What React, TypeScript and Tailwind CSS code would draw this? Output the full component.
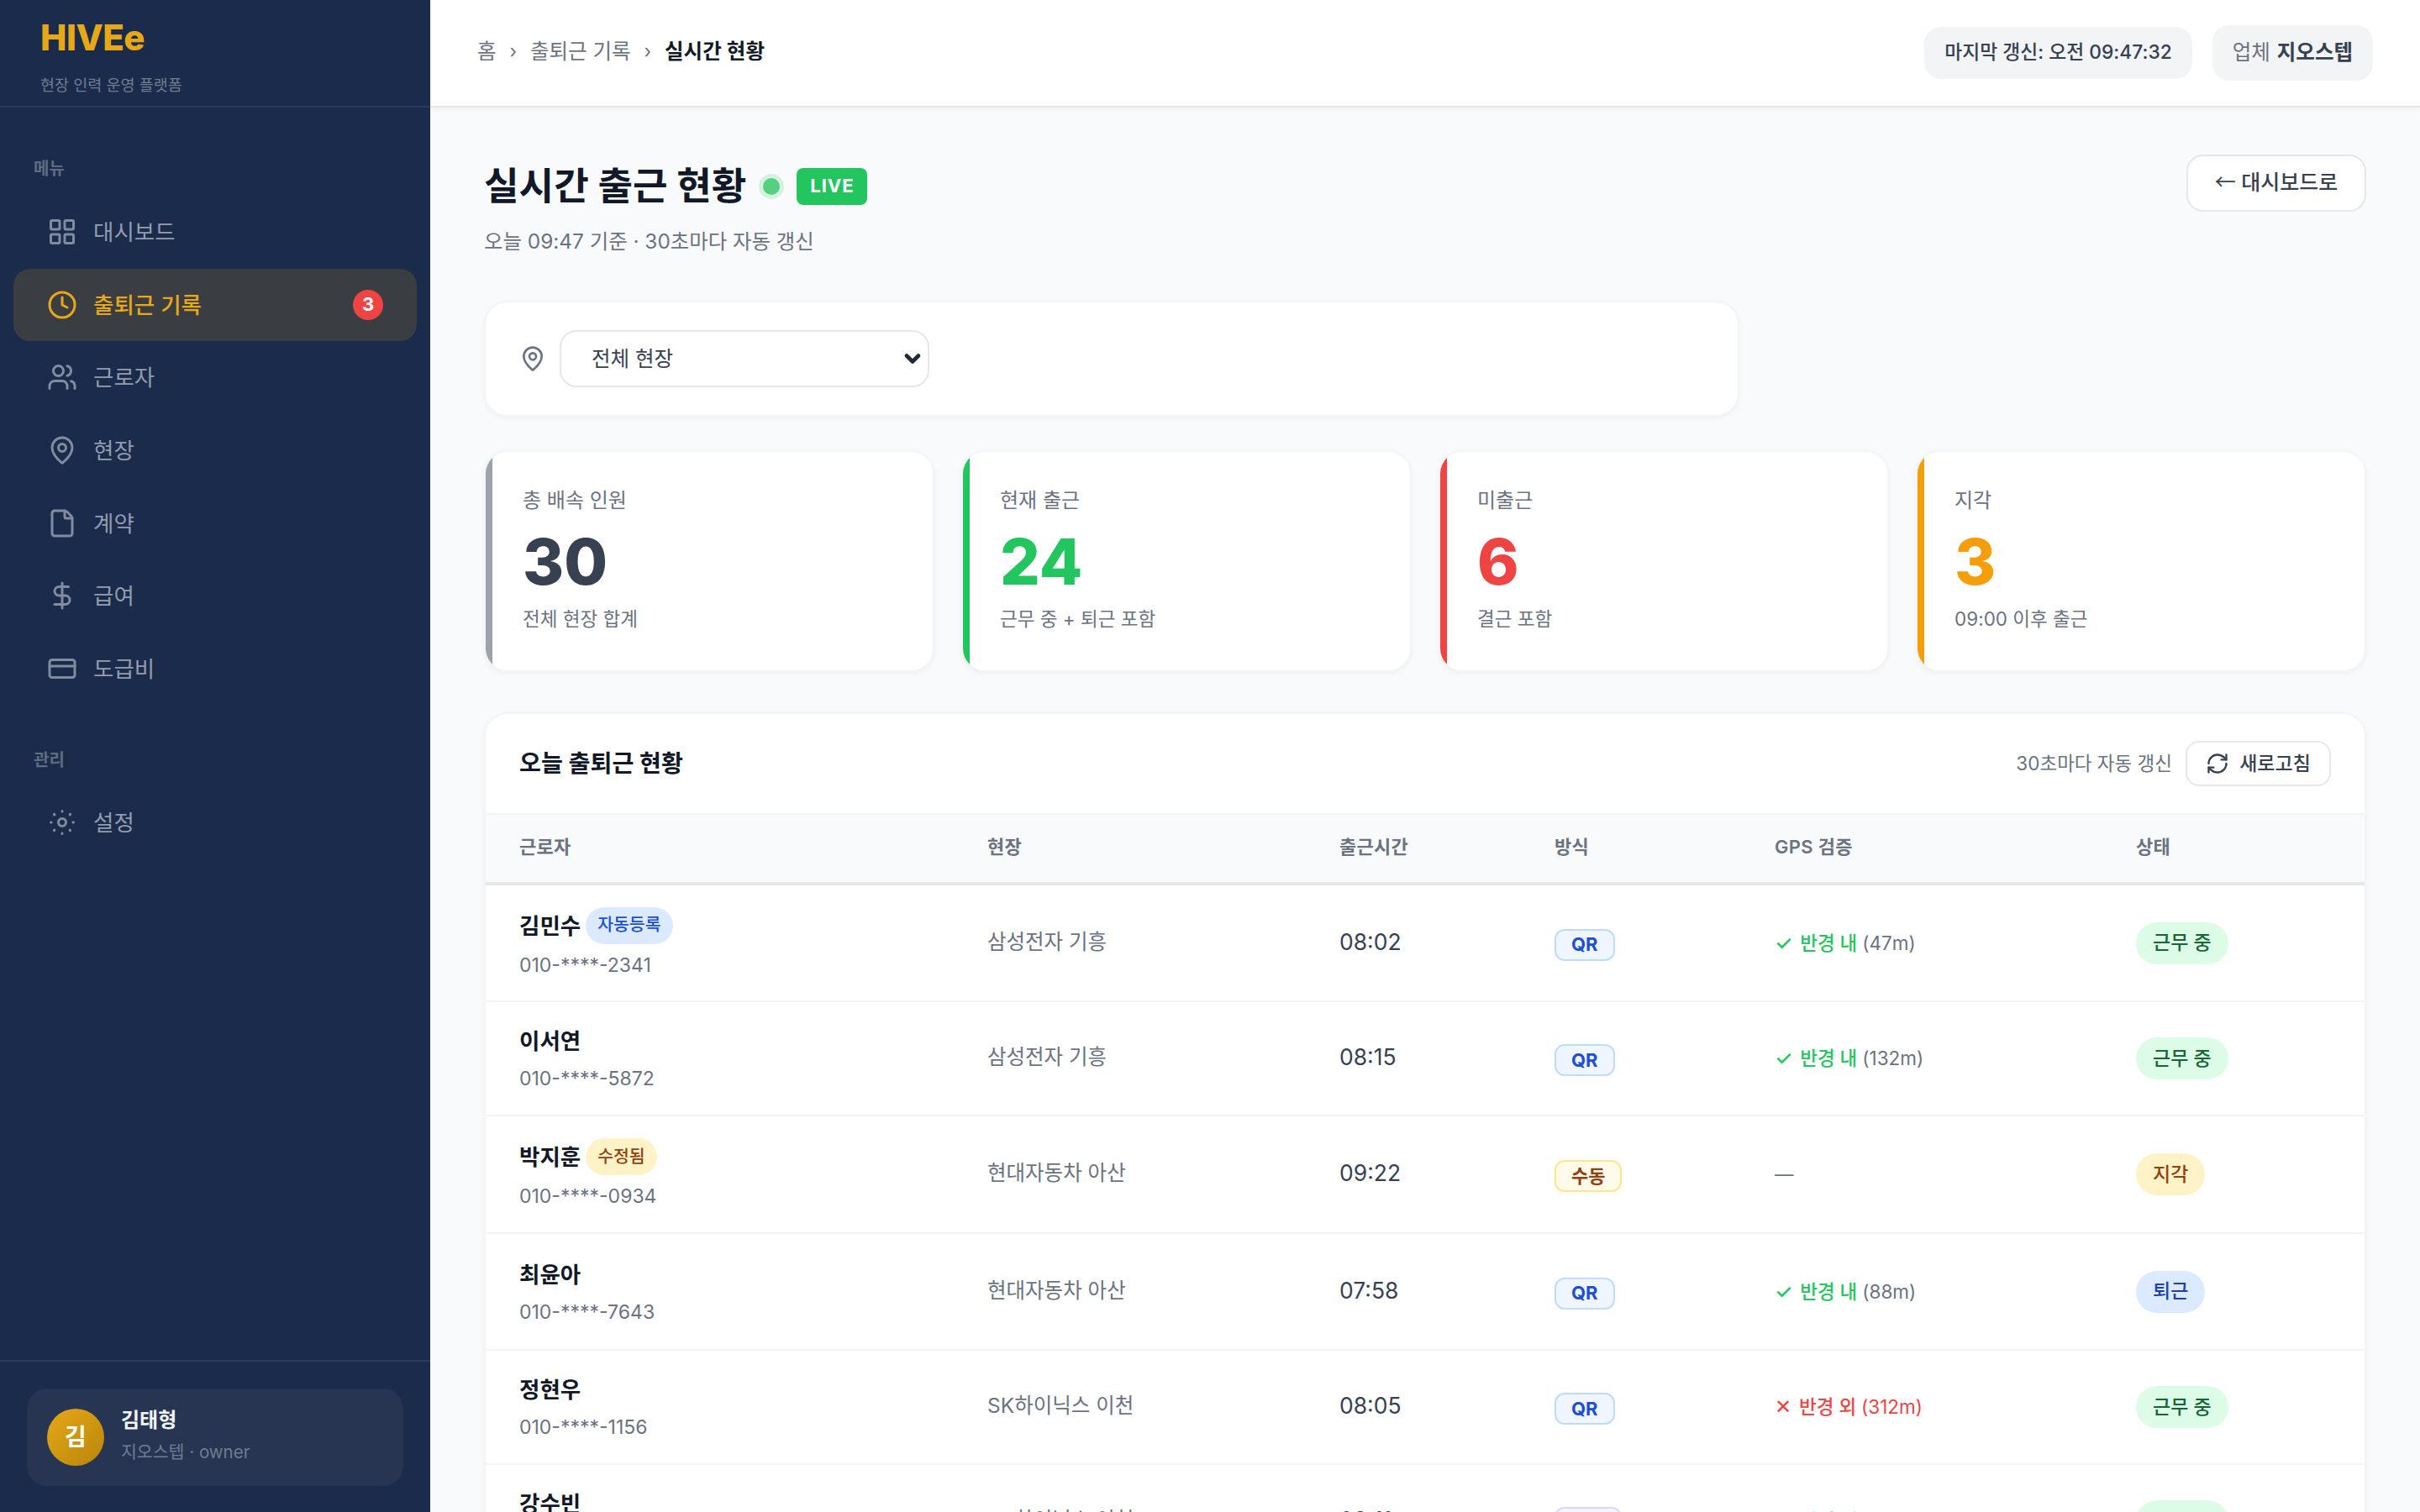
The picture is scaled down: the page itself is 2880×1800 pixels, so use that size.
import { LayoutGrid, Clock, Users, MapPin, File, DollarSign, CreditCard, RefreshCw, ChevronDown } from "lucide-react";

const FONT = "font-['Inter','Noto_Sans_CJK_KR',sans-serif]";

function SunIcon({ className }: { className?: string }) {
  // 설정 아이콘: 가운데 원 + 점 8개
  return (
    <svg viewBox="0 0 24 24" fill="none" stroke="currentColor" strokeWidth="2" strokeLinecap="round" className={className}>
      <circle cx="12" cy="12" r="3" />
      <path d="M12 3v.4M12 20.6v.4M3 12h.4M20.6 12h.4M5.6 5.6l.3.3M18.1 18.1l.3.3M5.6 18.4l.3-.3M18.1 5.9l.3-.3" />
    </svg>
  );
}

function NavItem({ icon: Icon, label, active, badge }: { icon: any; label: string; active?: boolean; badge?: string }) {
  return (
    <div
      className={
        active
          ? "flex items-center h-[86px] mb-[0.7px] pl-[40px] pr-[40px] rounded-[20px] bg-[#3a3e43] text-[#e6a817] font-medium"
          : "flex items-center h-[86px] mb-[0.7px] pl-[40px] pr-[40px] rounded-[20px] text-[#939daf]"
      }
    >
      <Icon className={active ? "w-[36px] h-[36px] shrink-0" : "w-[36px] h-[36px] shrink-0 opacity-85"} strokeWidth={2} />
      <span className="ml-[19px] text-[26.5px] leading-[40px] flex-1">{label}</span>
      {badge && (
        <span className="w-[36px] h-[36px] rounded-full bg-[#ef4444] text-white text-[22px] font-bold flex items-center justify-center">
          {badge}
        </span>
      )}
    </div>
  );
}

function Stat({ label, value, sub, strip, color }: { label: string; value: string; sub: string; strip: string; color: string }) {
  return (
    <div className="relative overflow-hidden bg-white rounded-[28px] border-2 border-[#f3f4f6] shadow-[0_2px_6px_rgba(0,0,0,0.05)] h-[264px] pl-[44px] pt-[40px]">
      <div className={`absolute left-0 top-0 bottom-0 w-[8px] ${strip}`} />
      <div className="text-[24px] leading-[36px] text-[#6b7280]">{label}</div>
      <div className={`text-[75px] leading-[84px] font-extrabold mt-[13px] ${color}`}>{value}</div>
      <div className="text-[22.5px] leading-[36px] text-[#6b7280] mt-[8px]">{sub}</div>
    </div>
  );
}

const rows = [
  { name: "김민수", tag: "자동등록", tagCls: "bg-[#dbeafe] text-[#1d4ed8]", phone: "010-****-2341", site: "삼성전자 기흥", time: "08:02", method: "QR", gps: "in", dist: "(47m)", status: "근무 중", h: "h-[140px]" },
  { name: "이서연", phone: "010-****-5872", site: "삼성전자 기흥", time: "08:15", method: "QR", gps: "in", dist: "(132m)", status: "근무 중", h: "h-[136px]" },
  { name: "박지훈", tag: "수정됨", tagCls: "bg-[#fef3c7] text-[#92400e]", phone: "010-****-0934", site: "현대자동차 아산", time: "09:22", method: "수동", gps: "none", dist: "", status: "지각", h: "h-[140px]" },
  { name: "최윤아", phone: "010-****-7643", site: "현대자동차 아산", time: "07:58", method: "QR", gps: "in", dist: "(88m)", status: "퇴근", h: "h-[139px]" },
  { name: "정현우", phone: "010-****-1156", site: "SK하이닉스 이천", time: "08:05", method: "QR", gps: "out", dist: "(312m)", status: "근무 중", h: "h-[136px]" },
  { name: "강수빈", phone: "010-****-3309", site: "SK하이닉스 이천", time: "08:11", method: "얼굴", gps: "in", dist: "(21m)", status: "근무 중", h: "h-[136px]" },
];

const methodCls: Record<string, string> = {
  QR: "bg-[#eff6ff] border-[#bfdbfe] text-[#1d4ed8]",
  수동: "bg-[#fffbeb] border-[#fde68a] text-[#92400e]",
  얼굴: "bg-[#f5f3ff] border-[#ddd6fe] text-[#6d28d9]",
};

const statusCls: Record<string, string> = {
  "근무 중": "bg-[#dcfce7] text-[#166534]",
  지각: "bg-[#fef3c7] text-[#92400e]",
  퇴근: "bg-[#dbeafe] text-[#1e40af]",
};

export default function App() {
  return (
    <div className={`${FONT} flex h-[1800px] w-[2880px] overflow-hidden bg-[#f9fafb]`}>
      {/* 사이드바 */}
      <aside className="w-[512px] shrink-0 h-full bg-[#1b2b4b] flex flex-col">
        <div className="h-[128px] border-b-2 border-[#2a3a5a] pl-[48px] pt-[18px]">
          <div className="text-[42px] leading-[54px] font-extrabold tracking-[-0.5px] text-[#e6a817]">HIVEe</div>
          <div className="text-[18.5px] leading-[30px] mt-[14px] text-[#6f7c91]">현장 인력 운영 플랫폼</div>
        </div>
        <nav className="flex-1 px-[16px] pt-[58px]">
          <div className="pl-[24px] text-[20px] leading-[30px] font-semibold text-[#5f6b80] mb-[17px]">메뉴</div>
          <NavItem icon={LayoutGrid} label="대시보드" />
          <NavItem icon={Clock} label="출퇴근 기록" active badge="3" />
          <NavItem icon={Users} label="근로자" />
          <NavItem icon={MapPin} label="현장" />
          <NavItem icon={File} label="계약" />
          <NavItem icon={DollarSign} label="급여" />
          <NavItem icon={CreditCard} label="도급비" />
          <div className="pl-[24px] text-[20px] leading-[30px] font-semibold text-[#5f6b80] mt-[51px] mb-[16px]">관리</div>
          <NavItem icon={SunIcon} label="설정" />
        </nav>
        <div className="border-t-2 border-[#2a3a5a] h-[181px] pt-[32px] px-[32px]">
          <div className="h-[116px] rounded-[24px] bg-[#273553] flex items-center pl-[24px]">
            <div className="w-[68px] h-[68px] rounded-full bg-gradient-to-br from-[#e6a817] to-[#b8860b] flex items-center justify-center text-white text-[28px] font-bold">김</div>
            <div className="ml-[20px] -mt-[4px]">
              <div className="text-[24px] leading-[38px] font-semibold text-[#f3f4f6]">김태형</div>
              <div className="text-[20.5px] leading-[34px] mt-[2px] text-[#6f7c91]">지오스텝 · owner</div>
            </div>
          </div>
        </div>
      </aside>

      <div className="flex-1 min-w-0 flex flex-col">
        {/* 상단바 */}
        <header className="h-[128px] shrink-0 bg-white border-b-2 border-[#e5e7eb] shadow-[0_2px_6px_rgba(0,0,0,0.04)] flex items-center pl-[56px] pr-[56px]">
          <div className="flex items-center gap-[16px] text-[24.5px] text-[#6b7280] flex-1 -mt-[3px]">
            <span>홈</span>
            <span className="text-[22px] text-[#6b7280]">›</span>
            <span>출퇴근 기록</span>
            <span className="text-[22px] text-[#6b7280]">›</span>
            <span className="font-semibold text-[#111827]">실시간 현황</span>
          </div>
          <div className="h-[62px] px-[24px] pb-[2px] rounded-[20px] bg-[#f3f4f6] flex items-center text-[22.8px] text-[#374151] font-medium">마지막 갱신: 오전 09:47:32</div>
          <div className="ml-[24px] h-[66px] px-[24px] pb-[2px] rounded-[20px] bg-[#f3f4f6] flex items-center gap-[8px] text-[24.5px] text-[#6b7280]">
            업체 <b className="font-bold text-[#374151]">지오스텝</b>
          </div>
        </header>

        {/* 본문 */}
        <main className="flex-1 px-[64px] pt-[56px] overflow-hidden">
          <div className="flex items-start justify-between h-[174px]">
            <div>
              <div className="flex items-center h-[76px]">
                <h1 className="text-[45.2px] font-bold text-[#111827] leading-[76px]">실시간 출근 현황</h1>
                <span className="ml-[20px] w-[20px] h-[20px] rounded-full bg-[#55d082] shadow-[0_0_0_5px_#d5f2e0]" />
                <span className="ml-[20px] h-[44px] w-[84px] pb-[2px] rounded-[8px] bg-[#22c55e] flex items-center justify-center text-white text-[22px] font-bold tracking-[1px]">LIVE</span>
              </div>
              <p className="mt-[8px] text-[24.4px] leading-[38px] text-[#6b7280]">오늘 09:47 기준 · 30초마다 자동 갱신</p>
            </div>
            <button className="h-[68px] w-[214px] bg-white border-2 border-[#e5e7eb] rounded-[20px] text-[25px] font-medium text-[#374151] pb-[3px]">
              <span className="font-['Noto_Sans_CJK_KR',sans-serif] font-normal">←</span> 대시보드로
            </button>
          </div>

          {/* 현장 필터 */}
          <div className="w-[1494px] h-[138px] bg-white rounded-[28px] border-2 border-[#f3f4f6] shadow-[0_2px_6px_rgba(0,0,0,0.04)] flex items-center pl-[40px]">
            <MapPin className="w-[32px] h-[32px] text-[#6b7280]" strokeWidth={2} />
            <div className="relative ml-[16px]">
              <select className="appearance-none w-[440px] h-[68px] pl-[36px] bg-white border-2 border-[#e5e7eb] rounded-[20px] text-[24.5px] text-[#374151] outline-none">
                <option>전체 현장</option>
              </select>
              <ChevronDown className="absolute right-[6px] top-[20px] w-[28px] h-[28px] text-[#1f2937]" strokeWidth={4} />
            </div>
          </div>

          {/* 요약 카드 */}
          <div className="grid grid-cols-4 gap-[32px] mt-[40px]">
            <Stat label="총 배속 인원" value="30" sub="전체 현장 합계" strip="bg-[#9ca3af]" color="text-[#374151]" />
            <Stat label="현재 출근" value="24" sub="근무 중 + 퇴근 포함" strip="bg-[#22c55e]" color="text-[#22c55e]" />
            <Stat label="미출근" value="6" sub="결근 포함" strip="bg-[#ef4444]" color="text-[#ef4444]" />
            <Stat label="지각" value="3" sub="09:00 이후 출근" strip="bg-[#f59e0b]" color="text-[#f59e0b]" />
          </div>

          {/* 출퇴근 테이블 */}
          <div className="mt-[48px] bg-white rounded-t-[28px] border-2 border-[#f3f4f6] shadow-[0_2px_6px_rgba(0,0,0,0.04)]">
            <div className="h-[118px] flex items-center justify-between pl-[40px] pr-[40px]">
              <h2 className="text-[28.2px] font-bold text-[#111827]">오늘 출퇴근 현황</h2>
              <div className="flex items-center gap-[16px]">
                <span className="text-[22.5px] text-[#6b7280]">30초마다 자동 갱신</span>
                <button className="h-[54px] w-[173px] border-2 border-[#e5e7eb] rounded-[16px] bg-white flex items-center justify-center gap-[12px] text-[23px] font-medium text-[#374151]">
                  <RefreshCw className="w-[28px] h-[28px]" strokeWidth={2} />
                  새로고침
                </button>
              </div>
            </div>
            <table className="w-[2236px] table-fixed border-collapse">
              <colgroup>
                <col className="w-[557px]" />
                <col className="w-[419px]" />
                <col className="w-[256px]" />
                <col className="w-[262px]" />
                <col className="w-[430px]" />
                <col className="w-[312px]" />
              </colgroup>
              <thead>
                <tr className="h-[83px] bg-[#f9fafb] border-t-2 border-t-[#f3f4f6] border-b-4 border-b-[#e5e7eb] text-left text-[22px] text-[#6b7280]">
                  {["근로자", "현장", "출근시간", "방식", "GPS 검증", "상태"].map((h) => (
                    <th key={h} className="pl-[40px] pb-[3px] font-semibold tracking-[0.3px]">{h}</th>
                  ))}
                </tr>
              </thead>
              <tbody>
                {rows.map((r) => (
                  <tr key={r.name} className={`${r.h} border-b-2 border-[#f3f4f6]`}>
                    <td className="pl-[40px] py-[25px]">
                      <div className="flex items-center gap-[6px] min-h-[40px]">
                        <span className="text-[26.5px] leading-[40px] font-semibold text-[#111827]">{r.name}</span>
                        {r.tag && <span className={`h-[44px] px-[14px] rounded-full flex items-center text-[20.5px] font-medium ${r.tagCls}`}>{r.tag}</span>}
                      </div>
                      <div className="text-[23px] leading-[34px] mt-[8px] text-[#6b7280]">{r.phone}</div>
                    </td>
                    <td className="pl-[40px] pb-[3px] text-[24.5px] text-[#6b7280]">{r.site}</td>
                    <td className="pl-[40px] pb-[2px] text-[26.5px] text-[#374151]">{r.time}</td>
                    <td className="pl-[40px] pt-[4px]">
                      <span className={`inline-flex items-center justify-center h-[38px] px-[18px] border-2 rounded-[12px] text-[22px] font-bold ${methodCls[r.method]}`}>{r.method}</span>
                    </td>
                    <td className="pl-[40px] text-[22.5px]">
                      {r.gps === "none" && <span className="text-[#6b7280]">—</span>}
                      {r.gps === "in" && (
                        <span className="font-medium text-[#22c55e]">
                          <span className="text-[24px] mr-[9px]">✓</span>반경 내 <span className="font-normal text-[#6b7280]">{r.dist}</span>
                        </span>
                      )}
                      {r.gps === "out" && (
                        <span className="font-medium text-[#ef4444]">
                          <span className="text-[24px] mr-[9px]">✕</span>반경 외 <span className="font-normal">{r.dist}</span>
                        </span>
                      )}
                    </td>
                    <td className="pl-[40px]">
                      <span className={`inline-flex items-center h-[50px] px-[20px] rounded-full text-[23px] font-medium ${statusCls[r.status]}`}>{r.status}</span>
                    </td>
                  </tr>
                ))}
              </tbody>
            </table>
          </div>
        </main>
      </div>
    </div>
  );
}
